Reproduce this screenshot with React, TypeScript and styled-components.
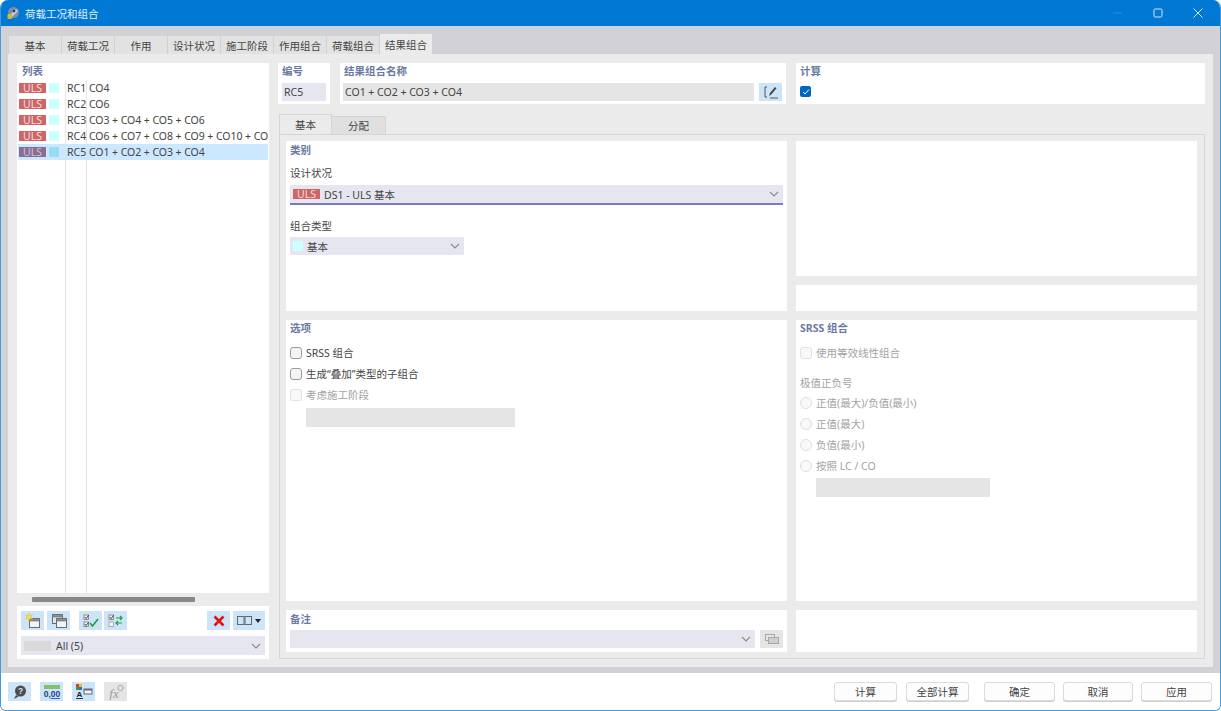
import React from "react";
import styled, { createGlobalStyle } from "styled-components";

const Global = createGlobalStyle`
  html, body { margin: 0; padding: 0; background: #fff; }
  * { box-sizing: border-box; }
  body { font-family: "Noto Sans", "Noto Sans CJK SC", sans-serif; font-size: 10.5px; color: #444; }
`;

const Win = styled.div`
  width: 1221px; height: 711px; display: flex; flex-direction: column; overflow: hidden;
  border: 1px solid #3f9ae0; border-top: none; border-radius: 8px 8px 6px 6px; background: #fff;
`;
const TitleBar = styled.div`
  height: 26px; flex: none; background: #0078d4; color: #e4f1fb; display: flex; align-items: center;
  padding: 0 3px 0 6px; gap: 5px; font-size: 10.5px; margin: 0 -1px;
`;
const TitleText = styled.span` flex: 1; `;
const WinBtns = styled.div` display: flex; `;
const WinBtn = styled.div`
  width: 40px; height: 26px; display: flex; align-items: center; justify-content: center;
`;
const Main = styled.div`
  height: 647px; flex: none; background: #d2d2d6; padding: 8px 7px 6px 7px; display: flex; flex-direction: column;
`;
const TabRow = styled.div` display: flex; height: 20px; flex: none; align-items: flex-end; padding-left: 1px; `;
const TopTab = styled.div<{ $active?: boolean }>`
  width: 53px; height: ${p => (p.$active ? "20px" : "18px")}; display: flex; align-items: center; justify-content: center;
  background: ${p => (p.$active ? "#ebebeb" : "#e2e2e2")};
  border-right: 1px solid #d2d2d6; font-size: 10.5px;
  color: #444; padding-top: 1px;
`;
const Panel = styled.div`
  flex: 1; background: #ebebeb; padding: 9px 8px 8px 9px; display: flex; gap: 9px; min-height: 0;
`;
const ListCard = styled.div`
  width: 252px; background: #fff; display: flex; flex-direction: column; flex: none;
`;
const Heading = styled.div`
  color: #6a7aa3; font-size: 10.5px; line-height: 14px; font-weight: 700;
`;
const ListHead = styled(Heading)` padding: 1px 0 2px 5px; height: 17px; `;
const ListBody = styled.div`
  flex: 1; padding: 0 1px; min-height: 0; overflow: hidden;
  background:
    linear-gradient(#e6e6e6, #e6e6e6) 48px 0 / 1px 100% no-repeat,
    linear-gradient(#e6e6e6, #e6e6e6) 69px 0 / 1px 100% no-repeat;
`;
const Row = styled.div<{ $sel?: boolean }>`
  height: 16px; display: flex; align-items: center; white-space: nowrap; overflow: hidden;
  background: ${p => (p.$sel ? "#cce8ff" : "transparent")};
`;
const RowText = styled.span` letter-spacing: -0.06px; `;
const Uls = styled.span<{ $sel?: boolean }>`
  width: 27px; height: 10px; flex: none; display: flex; align-items: center; justify-content: center;
  background: ${p => (p.$sel ? "#8c6d92" : "#cf6564")}; color: ${p => (p.$sel ? "#c9c3d8" : "#f6dcdc")};
  font-size: 10.5px; line-height: 10px;
`;
const Swatch = styled.span<{ $sel?: boolean }>`
  width: 10px; height: 10px; flex: none; background: ${p => (p.$sel ? "#99dcf5" : "#ccffff")};
`;
const RowUls = styled(Uls)` margin-left: 1px; `;
const RowSwatch = styled(Swatch)` margin-left: 3px; `;
const RowId = styled.span` margin-left: 8px; width: 22px; flex: none; `;
const Scroll = styled.div`
  height: 13px; flex: none; background: #ebebeb; padding: 4px 0 4px 15px; display: flex;
`;
const Thumb = styled.div` width: 163px; background: #888; border-radius: 1px; `;
const ToolRow = styled.div`
  flex: none; display: flex; padding: 5px 4px 0; height: 30px; align-items: flex-start;
`;
const IconBtn = styled.div<{ $w?: number; $h?: number; $ml?: number; $mt?: number; $off?: boolean }>`
  width: ${p => p.$w ?? 23}px; height: ${p => p.$h ?? 19}px; flex: none;
  margin-left: ${p => p.$ml ?? 0}px; margin-top: ${p => p.$mt ?? 0}px;
  background: ${p => (p.$off ? "#e5e5e5" : "#cce4f7")}; display: flex; align-items: center; justify-content: center; gap: 3px;
`;
const Select = styled.div<{ $w?: string; $line?: boolean; $mt?: number; $h?: number }>`
  width: ${p => p.$w ?? "100%"}; height: ${p => p.$h ?? (p.$line ? 20 : 18)}px; background: #e6e6f0; display: flex; align-items: center;
  padding: 0 4px 0 3px; gap: 4px; flex: none; margin-top: ${p => p.$mt ?? 0}px;
  border-bottom: ${p => (p.$line ? "2px solid #7b79c1" : "none")};
`;
const SelectText = styled.span` flex: 1; white-space: nowrap; `;
const ListSelect = styled.div` padding: 0 4px 4px; flex: none; `;
const GreySwatch = styled.span` width: 27px; height: 10px; background: #d9d9d9; flex: none; margin-right: 1px; `;
const Right = styled.div` flex: 1; display: flex; flex-direction: column; min-width: 0; `;
const TopCards = styled.div` display: flex; gap: 10px; height: 41px; flex: none; `;
const Card = styled.div<{ $w?: number; $area?: string; $pt?: number }>`
  background: #fff; padding: ${p => p.$pt ?? 1}px 4px 0; ${p => (p.$w ? `width: ${p.$w}px; flex: none;` : "flex: 1;")}
  ${p => (p.$area ? `grid-area: ${p.$area};` : "")}
`;
const TopField = styled.div<{ $grey?: boolean }>`
  height: 18px; margin-top: 5px; background: ${p => (p.$grey ? "#e5e5e5" : "#e6e6f0")}; padding: 0 3px 0 2px;
  display: flex; align-items: center; flex: 1;
`;
const FieldRow = styled.div<{ $mt?: number; $ml?: number }>`
  display: flex; gap: 5px; margin-top: ${p => p.$mt ?? 0}px; margin-left: ${p => p.$ml ?? 0}px;
`;
const CalcBox = styled.div` margin-top: 8px; `;
const InnerTabs = styled.div` display: flex; height: 20px; margin: 10px 0 0 1px; align-items: flex-end; flex: none; `;
const InnerTab = styled.div<{ $active?: boolean }>`
  width: ${p => (p.$active ? "53px" : "54px")}; height: ${p => (p.$active ? "20px" : "18px")}; display: flex; align-items: center; justify-content: center;
  background: ${p => (p.$active ? "#ebebeb" : "#e0e0e0")};
  border: 1px solid #d6d6d6; border-bottom: none; color: #444;
  ${p => (p.$active ? "" : "border-left: none;")}
`;
const Pane = styled.div`
  flex: 1; margin-left: 1px; border: 1px solid #d6d6d6; padding: 6px 7px 5px 6px; display: grid; min-height: 0;
  grid-template-columns: 501px 401px; grid-template-rows: 135px 26px 281px 42px; gap: 9px;
  grid-template-areas: "cat a" "cat b" "opt srss" "note e";
`;
const Label = styled.div<{ $off?: boolean; $mt?: number }>`
  margin-top: ${p => p.$mt ?? 0}px; line-height: 14px; color: ${p => (p.$off ? "#a3a3a3" : "#444")}; white-space: nowrap;
`;
const Check = styled.span<{ $off?: boolean }>`
  width: 12px; height: 12px; border-radius: 3px; flex: none; background: ${p => (p.$off ? "#f9f9f9" : "#f4f4f4")};
  border: 1px solid ${p => (p.$off ? "#e2e2e2" : "#9c9c9c")};
`;
const CheckOn = styled.span`
  width: 11px; height: 11px; border-radius: 2px; background: #0067c0; display: flex; align-items: center; justify-content: center;
`;
const Radio = styled.span`
  width: 12px; height: 12px; border-radius: 50%; flex: none; background: #f9f9f9; border: 1px solid #dedede;
`;
const OptRow = styled.div<{ $off?: boolean; $mt?: number }>`
  height: 21px; display: flex; align-items: center; gap: 4px; margin-top: ${p => p.$mt ?? 0}px;
  color: ${p => (p.$off ? "#a3a3a3" : "#444")}; white-space: nowrap;
`;
const RadioRow = styled(OptRow)` gap: 4px; `;
const DisabledInput = styled.div<{ $w: number; $mt: number }>`
  width: ${p => p.$w}px; height: 19px; background: #e5e5e5; margin: ${p => p.$mt}px 0 0 16px;
`;
const Footer = styled.div`
  flex: 1; display: flex; align-items: center; padding: 0 8px 0 7px; background: #fff; margin-top: 0;
`;
const FootIcons = styled.div` display: flex; gap: 9px; flex: 1; `;
const Btn = styled.div<{ $w: number; $ml?: number }>`
  width: ${p => p.$w}px; height: 19px; margin-left: ${p => p.$ml ?? 0}px; border: 1px solid #dcdcdc; border-radius: 3px;
  background: #fdfdfd; display: flex; align-items: center; justify-content: center; color: #444; box-shadow: 0 1px 0 #cfcfcf;
`;
const Chevron = () => (
  <svg width="10" height="6" viewBox="0 0 10 6"><path d="M1 1l4 4 4-4" fill="none" stroke="#8a8a8a" strokeWidth="1.1" /></svg>
);
const Win16 = ({ x, y, fill = "#f3f3f3" }: { x: number; y: number; fill?: string }) => (
  <g>
    <rect x={x} y={y} width="10" height="9" fill={fill} stroke="#6c6c6c" />
    <rect x={x} y={y} width="10" height="2.5" fill="#8f8f8f" stroke="#6c6c6c" strokeWidth="0.6" />
  </g>
);
const Tick = ({ x, y }: { x: number; y: number }) => (
  <g>
    <rect x={x} y={y} width="4.5" height="4.5" fill="#f5f5f5" stroke="#777" strokeWidth="0.8" />
    <path d={`M${x + 0.8} ${y + 2}l1.4 1.6 2.4-3.4`} fill="none" stroke="#333" strokeWidth="0.9" />
  </g>
);

const rows = [
  ["RC1", "CO4"],
  ["RC2", "CO6"],
  ["RC3", "CO3 + CO4 + CO5 + CO6"],
  ["RC4", "CO6 + CO7 + CO8 + CO9 + CO10 + CO"],
  ["RC5", "CO1 + CO2 + CO3 + CO4"],
];
const tabs = ["基本", "荷载工况", "作用", "设计状况", "施工阶段", "作用组合", "荷载组合", "结果组合"];

export default function App() {
  return (
    <Win>
      <Global />
      <TitleBar>
        <svg width="14" height="14" viewBox="0 0 14 14">
          <circle cx="7.5" cy="6.5" r="5.5" fill="#7f8ea6" />
          <path d="M4 9l6-6 2 2-6 6z" fill="#c3ccd8" />
          <rect x="1.5" y="8" width="4.5" height="5" rx="1" fill="#e0b23c" />
          <circle cx="8" cy="5" r="1.4" fill="#33475f" />
        </svg>
        <TitleText>荷载工况和组合</TitleText>
        <WinBtns>
          <WinBtn>
            <svg width="10" height="10" viewBox="0 0 10 10"><path d="M0 5h9" stroke="#2f8fdc" /></svg>
          </WinBtn>
          <WinBtn>
            <svg width="10" height="10" viewBox="0 0 10 10"><rect x="1" y="1" width="8" height="8" rx="1.2" fill="none" stroke="#d5e9f8" /></svg>
          </WinBtn>
          <WinBtn>
            <svg width="10" height="10" viewBox="0 0 10 10"><path d="M.5.5l9 9M9.5.5l-9 9" stroke="#d5e9f8" /></svg>
          </WinBtn>
        </WinBtns>
      </TitleBar>
      <Main>
        <TabRow>
          {tabs.map((t, i) => (
            <TopTab key={t} $active={i === 7}>{t}</TopTab>
          ))}
        </TabRow>
        <Panel>
          <ListCard>
            <ListHead>列表</ListHead>
            <ListBody>
              {rows.map(([id, text], i) => (
                <Row key={id} $sel={i === 4}>
                  <RowUls $sel={i === 4}>ULS</RowUls>
                  <RowSwatch $sel={i === 4} />
                  <RowId>{id}</RowId>
                  <RowText>{text}</RowText>
                </Row>
              ))}
            </ListBody>
            <Scroll><Thumb /></Scroll>
            <ToolRow>
              <IconBtn>
                <svg width="16" height="16" viewBox="0 0 16 16">
                  <Win16 x={4.5} y={5.5} />
                  <path d="M4 0l1 2.5L7.5 2 6 4l1.5 2L5 5.5 4 8 3 5.5.5 6 2 4 .5 2 3 2.5z" fill="#f4e04d" stroke="#d2b92c" strokeWidth=".4" />
                </svg>
              </IconBtn>
              <IconBtn $ml={3}>
                <svg width="16" height="16" viewBox="0 0 16 16">
                  <Win16 x={1.5} y={1.5} fill="#d8e6f2" />
                  <Win16 x={5.5} y={5.5} />
                </svg>
              </IconBtn>
              <IconBtn $ml={9}>
                <svg width="16" height="16" viewBox="0 0 16 16">
                  <Tick x={1} y={2} /><Tick x={1} y={9} />
                  <path d="M7 10l2.5 3L15 6" fill="none" stroke="#1f9b46" strokeWidth="1.6" />
                </svg>
              </IconBtn>
              <IconBtn $ml={2}>
                <svg width="16" height="16" viewBox="0 0 16 16">
                  <Tick x={1} y={2} />
                  <rect x="1" y="9" width="4.5" height="4.5" fill="#f5f5f5" stroke="#999" strokeWidth=".8" />
                  <path d="M8 5h6M12 3l2 2-2 2M14 10H8M10 8l-2 2 2 2" fill="none" stroke="#1f9b46" strokeWidth="1.1" />
                </svg>
              </IconBtn>
              <IconBtn $ml={80}>
                <svg width="12" height="12" viewBox="0 0 12 12"><path d="M1.5 1.5l9 9M10.5 1.5l-9 9" stroke="#e0121a" strokeWidth="2.6" /></svg>
              </IconBtn>
              <IconBtn $ml={3} $w={32}>
                <svg width="15" height="9" viewBox="0 0 15 9">
                  <rect x=".5" y=".5" width="6.5" height="8" fill="none" stroke="#666" />
                  <rect x="8" y=".5" width="6.5" height="8" fill="none" stroke="#666" />
                </svg>
                <svg width="6" height="4" viewBox="0 0 6 4"><path d="M0 0h6L3 4z" fill="#222" /></svg>
              </IconBtn>
            </ToolRow>
            <ListSelect>
              <Select $h={19}>
                <GreySwatch />
                <SelectText>All (5)</SelectText>
                <Chevron />
              </Select>
            </ListSelect>
          </ListCard>
          <Right>
            <TopCards>
              <Card $w={52}>
                <Heading>编号</Heading>
                <TopField>RC5</TopField>
              </Card>
              <Card $w={446}>
                <Heading>结果组合名称</Heading>
                <FieldRow $ml={-1}>
                  <TopField $grey>CO1 + CO2 + CO3 + CO4</TopField>
                  <IconBtn $w={23} $h={18} $mt={5}>
                    <svg width="16" height="14" viewBox="0 0 16 14">
                      <path d="M4 2H2v10h2M7 13h8" fill="none" stroke="#555" />
                      <path d="M6 11l1-3 5-6 1.5 1.2-5 6z" fill="#444" />
                    </svg>
                  </IconBtn>
                </FieldRow>
              </Card>
              <Card>
                <Heading>计算</Heading>
                <CalcBox>
                  <CheckOn>
                    <svg width="8" height="8" viewBox="0 0 8 8"><path d="M1 4l2 2 4-4.5" fill="none" stroke="#fff" /></svg>
                  </CheckOn>
                </CalcBox>
              </Card>
            </TopCards>
            <InnerTabs>
              <InnerTab $active>基本</InnerTab>
              <InnerTab>分配</InnerTab>
            </InnerTabs>
            <Pane>
              <Card $area="cat" $pt={2}>
                <Heading>类别</Heading>
                <Label $mt={9}>设计状况</Label>
                <Select $line $mt={5}>
                  <Uls>ULS</Uls>
                  <SelectText>DS1 - ULS 基本</SelectText>
                  <Chevron />
                </Select>
                <Label $mt={14}>组合类型</Label>
                <Select $w="174px" $mt={4}>
                  <Swatch />
                  <SelectText>基本</SelectText>
                  <Chevron />
                </Select>
              </Card>
              <Card $area="a" />
              <Card $area="b" />
              <Card $area="opt">
                <Heading>选项</Heading>
                <OptRow $mt={7}><Check />SRSS 组合</OptRow>
                <OptRow><Check />生成“叠加”类型的子组合</OptRow>
                <OptRow $off><Check $off />考虑施工阶段</OptRow>
                <DisabledInput $w={209} $mt={3} />
              </Card>
              <Card $area="srss">
                <Heading>SRSS 组合</Heading>
                <OptRow $off $mt={7}><Check $off />使用等效线性组合</OptRow>
                <Label $off $mt={13}>极值正负号</Label>
                <RadioRow $off $mt={2}><Radio />正值(最大)/负值(最小)</RadioRow>
                <RadioRow $off><Radio />正值(最大)</RadioRow>
                <RadioRow $off><Radio />负值(最小)</RadioRow>
                <RadioRow $off><Radio />按照 LC / CO</RadioRow>
                <DisabledInput $w={174} $mt={2} />
              </Card>
              <Card $area="note" $pt={2}>
                <Heading>备注</Heading>
                <FieldRow $mt={4}>
                  <Select $w="465px">
                    <SelectText />
                    <Chevron />
                  </Select>
                  <IconBtn $w={23} $h={18} $off>
                    <svg width="16" height="14" viewBox="0 0 16 14">
                      <rect x="1.5" y="2.5" width="9" height="6" fill="none" stroke="#a8a8a8" />
                      <rect x="4.5" y="5.5" width="10" height="6" fill="#cfcfcf" stroke="#a8a8a8" />
                    </svg>
                  </IconBtn>
                </FieldRow>
              </Card>
              <Card $area="e" />
            </Pane>
          </Right>
        </Panel>
      </Main>
      <Footer>
        <FootIcons>
          <IconBtn>
            <svg width="16" height="16" viewBox="0 0 16 16">
              <circle cx="8.5" cy="7" r="5.5" fill="#4c4c4c" />
              <path d="M4 11L2 15l4.5-2.5z" fill="#4c4c4c" />
              <text x="8.5" y="10" fontSize="8.5" fontWeight="700" fill="#d8e6f2" textAnchor="middle" fontFamily="Liberation Sans">?</text>
            </svg>
          </IconBtn>
          <IconBtn>
            <svg width="18" height="16" viewBox="0 0 18 16">
              <rect x="1" y="1" width="16" height="4" fill="#86c06c" />
              <text x="9" y="13" fontSize="8.5" fontWeight="700" fill="#1f3f8f" textAnchor="middle" fontFamily="Liberation Sans">0,00</text>
              <path d="M8 14.5h9" stroke="#1f3f8f" strokeWidth=".8" />
            </svg>
          </IconBtn>
          <IconBtn>
            <svg width="18" height="17" viewBox="0 0 18 17">
              <rect x="1" y="1" width="3" height="3" fill="#d93b2b" />
              <rect x="4" y="1" width="3" height="3" fill="#e6c12e" />
              <rect x="1" y="4" width="3" height="3" fill="#3a9b3f" />
              <rect x="4" y="4" width="3" height="3" fill="#2f6fd0" />
              <text x="4.5" y="14" fontSize="8" fontWeight="700" fill="#222" textAnchor="middle" fontFamily="Liberation Sans">A</text>
              <rect x="9" y="6" width="8" height="5" fill="#f4f4f4" stroke="#667" />
              <rect x="9" y="6" width="8" height="1.5" fill="#667" />
              <path d="M1 15.5h7" stroke="#333" />
            </svg>
          </IconBtn>
          <IconBtn $off>
            <svg width="18" height="16" viewBox="0 0 18 16">
              <text x="7" y="13.5" fontSize="13" fontStyle="italic" fill="#9a9a9a" textAnchor="middle" fontFamily="Liberation Serif">fx</text>
              <circle cx="13.5" cy="4" r="2.6" fill="none" stroke="#9a9a9a" strokeWidth=".8" />
            </svg>
          </IconBtn>
        </FootIcons>
        <Btn $w={63}>计算</Btn>
        <Btn $w={63} $ml={9}>全部计算</Btn>
        <Btn $w={71} $ml={15}>确定</Btn>
        <Btn $w={70} $ml={8}>取消</Btn>
        <Btn $w={71} $ml={8}>应用</Btn>
      </Footer>
    </Win>
  );
}
